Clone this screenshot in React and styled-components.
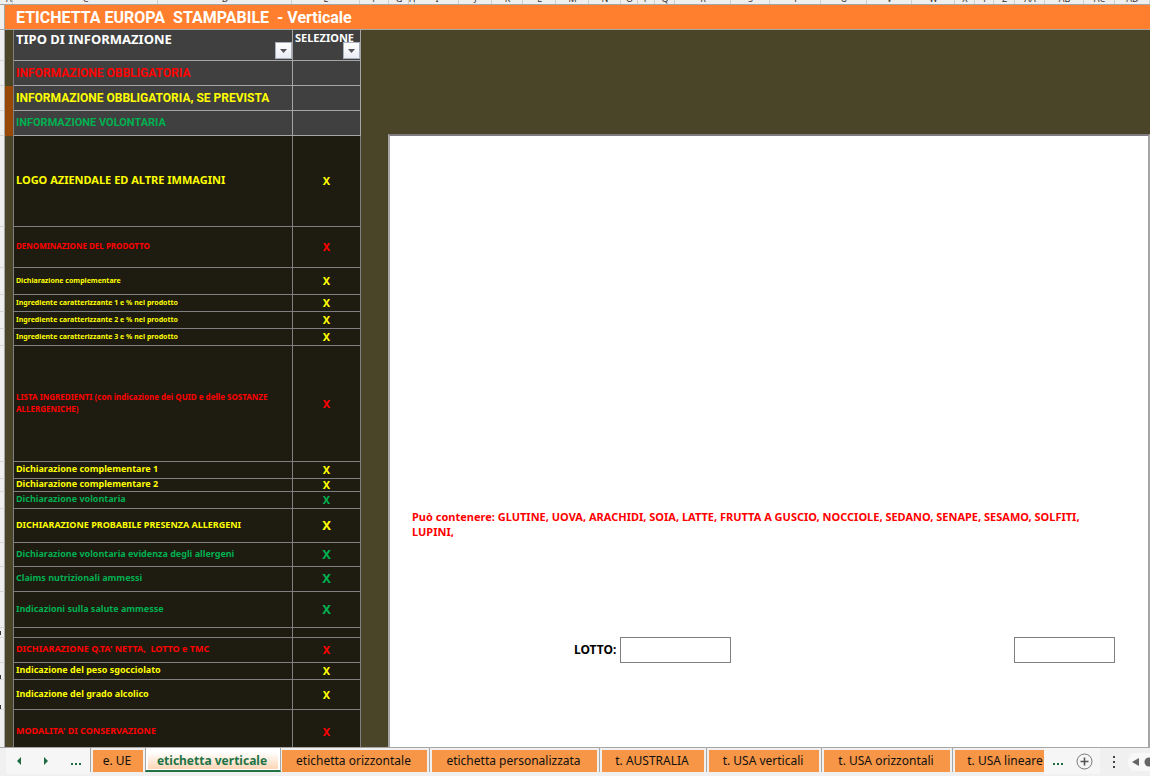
import React, { useState } from 'react';
import styled, { createGlobalStyle } from 'styled-components';

const GlobalStyle = createGlobalStyle`
  * { box-sizing: border-box; }
  body {
    margin: 0;
    font-family: "Noto Sans", sans-serif;
    background: #f0f0f0;
  }
`;

const colors = {
  red: '#ff0000',
  yellow: '#ffff00',
  green: '#00b050',
};

const Page = styled.div`
  display: flex;
  flex-direction: column;
  height: 100vh;
  overflow: hidden;
`;

const ColumnHeads = styled.div`
  display: flex;
  flex: none;
  height: 5px;
  padding-left: 5px;
  overflow: hidden;
  background: #efefef;
  border-bottom: 1px solid #a6a6a6;
`;

const ColumnHead = styled.div`
  flex: ${(p) => p.$w} 0 0px;
  display: flex;
  align-items: flex-end;
  justify-content: center;
  min-width: 0;
  height: 4px;
  box-shadow: inset -1px 0 #cfcfcf;
  font-size: 9px;
  line-height: 10px;
  color: #333;
`;

const Banner = styled.header`
  display: flex;
  flex: none;
  height: 25px;
  background: #efefef;
`;

const BannerCorner = styled.div`
  width: 5px;
  border-right: 1px solid #a6a6a6;
  border-bottom: 1px solid #a6a6a6;
`;

const Title = styled.h1`
  flex: 1;
  margin: 0;
  padding-left: 11px;
  background: #ff7f2e;
  border-bottom: 1px solid #a6a6a6;
  color: white;
  font-family: Roboto, sans-serif;
  font-size: 16px;
  line-height: 25px;
  white-space: pre;
`;

const Sheet = styled.main`
  display: flex;
  flex: 1;
  min-height: 0;
  overflow: hidden;
  background: #4a4528;
`;

const InfoTable = styled.table`
  flex: none;
  width: 361px;
  height: max-content;
  table-layout: fixed;
  border-spacing: 0;
`;

const Row = styled.tr`
  height: ${(p) => p.$h}px;
`;

const Gutter = styled.td`
  padding: 0;
  background: #efefef;
  border-right: 1px solid #a6a6a6;
  border-bottom: 1px solid #d4d4d4;
  vertical-align: ${(p) => p.$align || 'middle'};
`;

const Mark = styled.span`
  display: block;
  width: 1px;
  height: 4px;
  background: #333;
`;

const Edge = styled.td`
  padding: 0;
  background: ${(p) => (p.$brown ? '#974806' : '#4a4528')};
  border-right: 1px solid #7f7f7f;
`;

const HeadCell = styled.th`
  position: relative;
  padding: 0 2px;
  background: #404040;
  border-right: 1px solid #a6a6a6;
  border-bottom: 1px solid #a6a6a6;
  color: white;
  font-size: ${(p) => p.$size}px;
  line-height: ${(p) => (p.$size > 11 ? 18 : 16)}px;
  text-align: left;
  vertical-align: top;
  white-space: nowrap;
`;

const FilterButton = styled.button`
  position: absolute;
  right: 0;
  bottom: 1px;
  display: flex;
  align-items: center;
  justify-content: center;
  width: 17px;
  height: 17px;
  padding: 0;
  background: linear-gradient(#ffffff, #e9edf5);
  border: 1px solid #a9b0bd;
`;

const Cell = styled.td`
  padding: 0 2px ${(p) => (p.$raised ? 2 : 0)}px;
  background: ${(p) => (p.$legend ? '#404040' : '#1e1b10')};
  border-right: 1px solid ${(p) => (p.$legend ? '#a6a6a6' : '#7f7f7f')};
  border-bottom: 1px solid ${(p) => (p.$legend ? '#a6a6a6' : '#7f7f7f')};
  color: ${(p) => colors[p.$color]};
  font-family: ${(p) => (p.$font ? `"${p.$font}", ` : '')}"Noto Sans", sans-serif;
  font-size: ${(p) => p.$size}px;
  font-weight: bold;
  line-height: ${(p) => (p.$tight ? 10 : 12)}px;
  vertical-align: middle;
`;

const MarkCell = styled(Cell)`
  text-align: center;
`;

const Canvas = styled.div`
  display: flex;
  flex: 1;
  padding: 104px 0 0 27px;
`;

const Label = styled.section`
  flex: 1;
  padding: 373px 33px 0 22px;
  background: white;
  border: 2px solid #a6a6a6;
  border-top-color: #7f7a7f;
  border-bottom: none;
`;

const Allergens = styled.p`
  margin: 0;
  color: #ff0000;
  font-size: 11px;
  font-weight: bold;
  line-height: 15px;
`;

const LotRow = styled.div`
  display: flex;
  align-items: center;
  margin-top: 98px;
  padding-left: 162px;
`;

const LotLabel = styled.label`
  width: 46px;
  padding-bottom: 2px;
  font-size: 12px;
  font-weight: bold;
`;

const LotInput = styled.input`
  width: ${(p) => p.$w}px;
  height: 26px;
  padding: 0 4px;
  border: 1px solid #7f7f7f;
  background: white;
  font-family: inherit;
  font-size: 12px;

  &:last-child {
    margin-left: auto;
  }
`;

const TabBar = styled.nav`
  display: flex;
  flex: none;
  height: 29px;
  padding-left: 6px;
  border-top: 1px solid #a6a6a6;
  background: #f0f0f0;
`;

const TabNav = styled.div`
  display: flex;
  align-items: center;
  justify-content: space-between;
  width: 84px;
  height: 26px;
  padding: 0 8px 0 10px;
  background: #f6f6f6;
`;

const IconButton = styled.button`
  display: flex;
  padding: 0;
  border: none;
  background: none;
  color: #1d6b41;
`;

const Tabs = styled.div`
  display: flex;
  flex: 1;
  min-width: 0;
  overflow: hidden;
`;

const ActiveSlot = styled.div`
  flex: none;
  width: 136px;
  height: 24px;
  padding: 0 2px 1px;
  background: white;
  border: 1px solid #a6a6a6;
  border-top: none;
  border-bottom: 2px solid #217346;
`;

const TabSlot = styled.div`
  flex: none;
  width: ${(p) => p.$w}px;
  height: 24px;
  padding: 2px 2px 0;
  border-left: 1px solid #a6a6a6;

  ${ActiveSlot} + & {
    padding-left: 1px;
    border-left: none;
  }
`;

const Tab = styled.button`
  display: block;
  width: 100%;
  height: 22px;
  padding: 0 2px 0 0;
  border: none;
  background: #f79646;
  color: #111;
  font-family: inherit;
  font-size: 12px;
  line-height: 22px;
  white-space: nowrap;
`;

const ActiveTab = styled(Tab)`
  height: 21px;
  background: linear-gradient(#ffffff 20%, #fcd5b5);
  color: #217346;
  font-weight: bold;
  line-height: 25px;
`;

const TabTools = styled.div`
  display: flex;
  align-items: center;
  gap: 12px;
  width: 56px;
  height: 26px;
  padding-left: 8px;
  background: #f6f6f6;
`;

const ScrollArea = styled.div`
  display: flex;
  align-items: center;
  justify-content: space-between;
  width: 50px;
  height: 27px;
  padding-left: 13px;
`;

const legend = [
  { text: 'INFORMAZIONE OBBLIGATORIA', color: 'red', size: 12 },
  { text: 'INFORMAZIONE OBBLIGATORIA, SE PREVISTA', color: 'yellow', size: 12, brown: true },
  { text: 'INFORMAZIONE VOLONTARIA', color: 'green', size: 11, brown: true },
];

const rows = [
  { h: 91, text: 'LOGO AZIENDALE ED ALTRE IMMAGINI', color: 'yellow', size: 11 },
  { h: 41, text: 'DENOMINAZIONE DEL PRODOTTO', color: 'red', size: 8 },
  { h: 27, text: 'Dichiarazione complementare', color: 'yellow', size: 7 },
  { h: 17, text: 'Ingrediente caratterizzante 1 e % nel prodotto', color: 'yellow', size: 7 },
  { h: 17, text: 'Ingrediente caratterizzante 2 e % nel prodotto', color: 'yellow', size: 7 },
  { h: 17, text: 'Ingrediente caratterizzante 3 e % nel prodotto', color: 'yellow', size: 7 },
  { h: 116, text: 'LISTA INGREDIENTI (con indicazione dei QUID e delle SOSTANZE ALLERGENICHE)', color: 'red', size: 8 },
  { h: 17, text: 'Dichiarazione complementare 1', color: 'yellow', size: 9 },
  { h: 13, text: 'Dichiarazione complementare 2', color: 'yellow', size: 9 },
  { h: 17, text: 'Dichiarazione volontaria', color: 'green', size: 9 },
  { h: 34, text: 'DICHIARAZIONE PROBABILE PRESENZA ALLERGENI', color: 'yellow', size: 9, big: true },
  { h: 24, text: 'Dichiarazione volontaria evidenza degli allergeni', color: 'green', size: 9, big: true },
  { h: 25, text: 'Claims nutrizionali ammessi', color: 'green', size: 9, big: true },
  { h: 36, text: 'Indicazioni sulla salute ammesse', color: 'green', size: 9, big: true },
  { h: 10, text: '', color: 'green', size: 7, mark: 'middle' },
  { h: 25, text: "DICHIARAZIONE Q.TA' NETTA,\u00a0 LOTTO e TMC", color: 'red', size: 9 },
  { h: 17, text: 'Indicazione del peso sgocciolato', color: 'yellow', size: 9, mark: 'bottom' },
  { h: 30, text: 'Indicazione del grado alcolico', color: 'yellow', size: 9, mark: 'bottom' },
  { h: 44, text: "MODALITA' DI CONSERVAZIONE", color: 'red', size: 9 },
];

const columns = [
  ['A', 8], ['C', 145], ['D', 134], ['E', 68], ['F', 29], ['G', 20], ['H', 6], ['I', 44],
  ['J', 33], ['K', 31], ['L', 33], ['M', 33], ['N', 32], ['O', 17], ['P', 17], ['Q', 20],
  ['R', 56], ['S', 39], ['T', 51], ['U', 46], ['V', 45], ['W', 43], ['X', 20], ['Y', 19],
  ['Z', 21], ['AA', 30], ['AB', 39], ['AC', 31], ['AD', 35],
];

const tabs = [
  { name: 'e. UE', w: 55 },
  { name: 'etichetta verticale' },
  { name: 'etichetta orizzontale', w: 148 },
  { name: 'etichetta personalizzata', w: 170 },
  { name: 't. AUSTRALIA', w: 107 },
  { name: 't. USA verticali', w: 115 },
  { name: 't. USA orizzontali', w: 131 },
  { name: 't. USA lineare', w: 107 },
];

const Filter = ({ label }) => (
  <FilterButton aria-label={label}>
    <svg width="7" height="4" viewBox="0 0 7 4">
      <path d="M0 0h7L3.5 4z" fill="#555" />
    </svg>
  </FilterButton>
);

const Dots = ({ vertical }) => (
  vertical ? (
    <svg width="3" height="12" viewBox="0 0 3 12" fill="#444">
      <path d="M0 0h2v2H0zM0 5h2v2H0zM0 10h2v2H0z" />
    </svg>
  ) : (
    <svg width="12" height="10" viewBox="0 0 12 10" fill="#1d6b41">
      <path d="M1 7h2v2H1zM5 7h2v2H5zM9 7h2v2H9z" />
    </svg>
  )
);

const InfoPanel = () => (
  <InfoTable>
    <colgroup>
      <col style={{ width: 5 }} />
      <col style={{ width: 9 }} />
      <col style={{ width: 279 }} />
      <col style={{ width: 68 }} />
    </colgroup>
    <thead>
      <Row $h={31}>
        <Gutter />
        <Edge />
        <HeadCell $size={13}>TIPO DI INFORMAZIONE<Filter label="Filtra tipo" /></HeadCell>
        <HeadCell $size={11}>SELEZIONE<Filter label="Filtra selezione" /></HeadCell>
      </Row>
    </thead>
    <tbody>
      {legend.map((item) => (
        <Row key={item.text} $h={25}>
          <Gutter />
          <Edge $brown={item.brown} />
          <Cell $legend $color={item.color} $size={item.size} $font="Roboto">{item.text}</Cell>
          <Cell $legend />
        </Row>
      ))}
      {rows.map((row) => (
        <Row key={row.h + row.text} $h={row.h}>
          <Gutter $align={row.mark}>{row.mark && <Mark />}</Gutter>
          <Edge />
          <Cell $color={row.color} $size={row.size} $raised={row.size > 7} $tight={row.h < 20}>{row.text}</Cell>
          <MarkCell $color={row.color} $size={row.big ? 13 : 11} $raised={row.big}>{row.text && 'X'}</MarkCell>
        </Row>
      ))}
    </tbody>
  </InfoTable>
);

const LabelPreview = () => (
  <Canvas>
    <Label>
      <Allergens>
        Può contenere: GLUTINE, UOVA, ARACHIDI, SOIA, LATTE, FRUTTA A GUSCIO, NOCCIOLE, SEDANO, SENAPE, SESAMO, SOLFITI, LUPINI,
      </Allergens>
      <LotRow>
        <LotLabel htmlFor="lotto">LOTTO:</LotLabel>
        <LotInput id="lotto" $w={111} />
        <LotInput aria-label="TMC" $w={101} />
      </LotRow>
    </Label>
  </Canvas>
);

const SheetTabs = () => {
  const [active, setActive] = useState('etichetta verticale');

  return (
    <TabBar>
      <TabNav>
        <IconButton aria-label="Precedente">
          <svg width="6" height="8" viewBox="0 0 6 8"><path d="M5 0v8L1 4z" fill="currentColor" /></svg>
        </IconButton>
        <IconButton aria-label="Successivo">
          <svg width="6" height="8" viewBox="0 0 6 8"><path d="M1 0v8l4-4z" fill="currentColor" /></svg>
        </IconButton>
        <IconButton aria-label="Altri fogli"><Dots /></IconButton>
      </TabNav>
      <Tabs>
        {tabs.map((tab) => (
          tab.name === active ? (
            <ActiveSlot key={tab.name}>
              <ActiveTab>{tab.name}</ActiveTab>
            </ActiveSlot>
          ) : (
            <TabSlot key={tab.name} $w={tab.w || 136}>
              <Tab onClick={() => setActive(tab.name)}>{tab.name}</Tab>
            </TabSlot>
          )
        ))}
      </Tabs>
      <TabTools>
        <IconButton aria-label="Altri fogli"><Dots /></IconButton>
        <IconButton aria-label="Nuovo foglio">
          <svg width="17" height="17" viewBox="0 0 17 17" fill="none" stroke="#777">
            <circle cx="8.5" cy="8.5" r="7.5" />
            <path d="M8.5 4.5v8M4.5 8.5h8" stroke="#555" strokeWidth="1.6" />
          </svg>
        </IconButton>
      </TabTools>
      <ScrollArea>
        <Dots vertical />
        <svg width="22" height="18" viewBox="0 0 22 18">
          <path d="M22 0H6a6 9 0 0 0 0 18h16z" fill="#f8f8f8" />
          <path d="M11 5v8L4 9z" fill="#666" />
          <circle cx="21" cy="9" r="4.5" fill="#666" />
        </svg>
      </ScrollArea>
    </TabBar>
  );
};

const App = () => {
  return (
    <Page>
      <GlobalStyle />
      <ColumnHeads>
        {columns.map(([name, w]) => <ColumnHead key={name} $w={w}>{name}</ColumnHead>)}
      </ColumnHeads>
      <Banner>
        <BannerCorner />
        <Title>{'ETICHETTA EUROPA  STAMPABILE  - Verticale'}</Title>
      </Banner>
      <Sheet>
        <InfoPanel />
        <LabelPreview />
      </Sheet>
      <SheetTabs />
    </Page>
  );
};

export default App;
